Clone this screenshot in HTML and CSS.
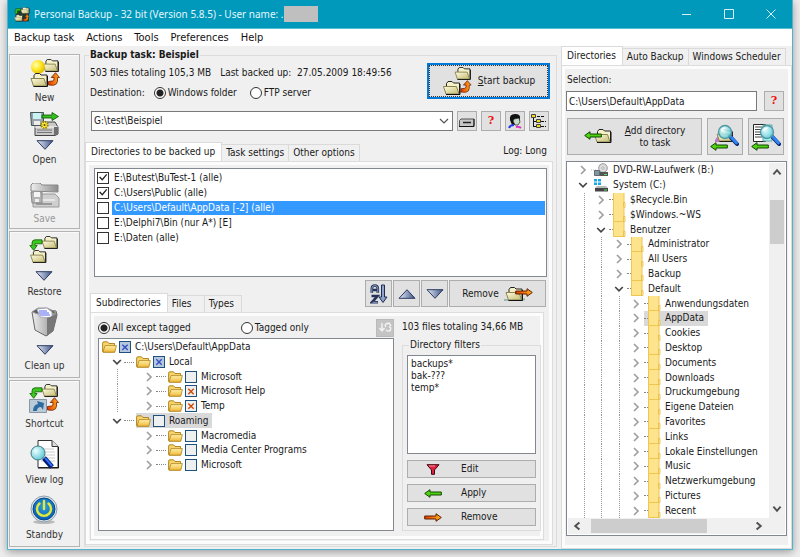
FILE: index.html
```
<!DOCTYPE html>
<html lang="en">
<head>
<meta charset="utf-8">
<title>Personal Backup</title>
<link rel="stylesheet" href="styles.css">
</head>
<body>
<svg class="defs" aria-hidden="true">
  <defs>
    <linearGradient id="gTri" x1="0" x2="1"><stop offset="0" stop-color="#e4eaf8"/><stop offset="1" stop-color="#3f5488"/></linearGradient>
    <linearGradient id="gCream" x1="0" y1="0" x2="1" y2="1"><stop offset="0" stop-color="#fffde0"/><stop offset="1" stop-color="#c2ba70"/></linearGradient>
    <linearGradient id="gGold" x1="0" y1="0" x2="0" y2="1"><stop offset="0" stop-color="#fff0a8"/><stop offset="1" stop-color="#f0b838"/></linearGradient>
    <linearGradient id="gOrange" x1="0" x2="1"><stop offset="0" stop-color="#e03800"/><stop offset="1" stop-color="#ffb020"/></linearGradient>
    <linearGradient id="gGrey" x1="0" x2="1"><stop offset="0" stop-color="#eeeeee"/><stop offset="1" stop-color="#8c8c8c"/></linearGradient>
    <radialGradient id="gBall" cx=".35" cy=".35" r=".7"><stop offset="0" stop-color="#ffffb0"/><stop offset=".5" stop-color="#ffe82a"/><stop offset="1" stop-color="#e0b800"/></radialGradient>
    <radialGradient id="gPower" cx=".5" cy=".4" r=".6"><stop offset="0" stop-color="#2aa0e0"/><stop offset="1" stop-color="#0a5cae"/></radialGradient>
    <radialGradient id="gLens" cx=".35" cy=".35" r=".7"><stop offset="0" stop-color="#ecffff"/><stop offset="1" stop-color="#5cc8d8"/></radialGradient>
  </defs>
  <symbol id="open-folder" viewBox="0 0 18 14">
    <path d="M3.500 12.500V2.500l1.500-2h4l1.500 1.500h6v10.500z" fill="#f4f0c8" stroke="#222"/>
    <path d="M.5 5.500h13l2.500 7.500H3z" fill="url(#gCream)" stroke="#8a8450"/>
    <path d="M3 13.500h14V3" fill="none" stroke="#111"/>
  </symbol>
  <symbol id="arrow-left" viewBox="0 0 18 9">
    <path d="M.7 4.500L6 .7v2.300h11.300v3H6v2.300z" fill="#4fd010" stroke="#104800"/>
  </symbol>
  <symbol id="arrow-right" viewBox="0 0 18 9">
    <path d="M17.300 4.500L12 .7v2.300H.7v3H12v2.300z" fill="url(#gOrange)" stroke="#602000"/>
  </symbol>
  <symbol id="arrow-bend" viewBox="0 0 12 14">
    <path d="M.5 9.500l4-.5q1.500-.3 1.500-2V5.500H3.200L7.500.7l4 4.800H9.500V9q0 3.500-4 4.300L.5 13z" fill="url(#gOrange)" stroke="#702000" stroke-width=".8"/>
  </symbol>
  <symbol id="arrow-down-bend" viewBox="0 0 14 12">
    <path d="M13 .8H6Q3 1 3 4v2.500H.8L4.700 11.300l3.500-4.800H6V4.800h7z" fill="#3cc820" stroke="#105c00" stroke-width=".8"/>
  </symbol>
  <symbol id="tri-down" viewBox="0 0 18 10">
    <path d="M1 .7h16L9 9.300z" fill="url(#gTri)" stroke="#2c3a60"/>
  </symbol>
  <symbol id="tri-up" viewBox="0 0 18 10">
    <path d="M1 9.300h16L9 .7z" fill="url(#gTri)" stroke="#2c3a60"/>
  </symbol>
  <symbol id="chev-right" viewBox="0 0 10 10">
    <path d="M3 1l4 4-4 4" fill="none" stroke="#a0a0a0" stroke-width="1.700"/>
  </symbol>
  <symbol id="chev-down" viewBox="0 0 10 10">
    <path d="M1.200 3L5 6.800 8.800 3" fill="none" stroke="#454545" stroke-width="1.700"/>
  </symbol>
  <symbol id="gold-folder" viewBox="0 0 15 12">
    <path d="M.6 10.500V2.200Q.6.8 2 .8h3.500L7 2.500h5.500V11H1z" fill="#f6d46a" stroke="#a87c18" stroke-width=".9"/>
    <path d="M1 11.200L3 4.600h11.400L12.800 11.200z" fill="url(#gGold)" stroke="#b08420" stroke-width=".8"/>
  </symbol>
  <symbol id="folder" viewBox="0 0 13 15">
    <path d="M0 0h11v15H0z" fill="#fde48c"/>
    <path d="M.5 0v14.500h10.500M11 0v10" fill="none" stroke="#eec650"/>
    <path d="M10.500 9.500h1.500v5h-1.500z" fill="#ffeeaa" stroke="#e6b93c" stroke-width=".8"/>
  </symbol>
  <symbol id="drive" viewBox="0 0 27 15">
    <path d="M3 5L7 1h16l3 5v7l-3 1.500H3z" fill="#c9c9c9" stroke="#444"/>
    <path d="M2.500 6H26" stroke="#fff"/>
    <path d="M5 9h15M5 11.500h15" stroke="#777"/>
    <path d="M22 6v8.500l4-2V6z" fill="#707070"/>
  </symbol>
  <symbol id="glass" viewBox="0 0 22 22">
    <path d="M13 12.500l7 7.500" stroke="#06206c" stroke-width="4" stroke-linecap="round"/>
    <path d="M13.500 12.500l6 6.500" stroke="#2e86f6" stroke-width="2.800" stroke-linecap="round"/>
    <circle cx="8" cy="8" r="6.500" fill="url(#gLens)" fill-opacity=".85" stroke="#4e9aa2" stroke-width="1.400"/>
    <path d="M4.500 7q1-3 4-3" fill="none" stroke="#fff" stroke-width="1.500"/>
  </symbol>
</svg>

<div class="window">
  <header class="titlebar">
    <svg class="app-icon" width="16" height="15" viewBox="0 0 30 28"><rect x="3" y="3" width="25" height="24" fill="#203a30"/><use href="#open-folder" x="12" y="0" width="18" height="13"/><use href="#open-folder" x="0" y="14" width="18" height="13"/><use href="#arrow-bend" x="17" y="13" width="12" height="14"/><use href="#arrow-down-bend" x="0" y="2" width="13" height="12"/></svg>
    <h1>Personal Backup - 32 bit (Version 5.8.5) - User name: .</h1><span class="redacted"></span>
    <div class="controls">
      <button aria-label="Minimize"><svg width="12" height="12" viewBox="0 0 12 12"><path d="M1 6.500h9"/></svg></button>
      <button aria-label="Maximize"><svg width="12" height="12" viewBox="0 0 12 12"><path d="M1.500 1.500h9v9h-9z"/></svg></button>
      <button aria-label="Close"><svg width="12" height="12" viewBox="0 0 12 12"><path d="M1.500 1.500l9 9M10.500 1.500l-9 9"/></svg></button>
    </div>
  </header>
  <nav class="menu">
    <button>Backup task</button><button>Actions</button><button>Tools</button><button>Preferences</button><button>Help</button>
  </nav>

  <div class="content">
    <aside class="toolbar">
      <div class="group">
        <button class="tool"><svg width="30" height="30" viewBox="0 0 30 30"><use href="#open-folder" x="12" y="1" width="18" height="13"/><circle cx="8" cy="9" r="7" fill="url(#gBall)"/><path d="M6 15h4v3H6z" fill="#d8c850"/><use href="#open-folder" x="0" y="15" width="19" height="14"/><use href="#arrow-bend" x="18" y="14" width="12" height="14"/></svg><span>New</span></button>
        <button class="tool"><svg width="30" height="26" viewBox="0 0 30 26"><use href="#drive" x="2" y="10" width="27" height="15"/><path d="M.5 1.500h13v13H1.500z" fill="#9ba4a6" stroke="#455"/><path d="M3 2h8v6H3z" fill="#c8f4f8"/><path d="M4 10h6v4H4z" fill="#eee"/><path d="M12 4h10V1.500l6.500 4-6.500 4V7H12z" fill="#34c020" stroke="#0c5000" stroke-width=".8"/><circle cx="14.500" cy="14" r="3.200" fill="#ffee40" stroke="#a08600" stroke-width="2" stroke-dasharray="1.500 1"/><circle cx="14.500" cy="14" r="1" fill="#554400"/></svg><svg class="tri" width="18" height="10"><use href="#tri-down"/></svg><span>Open</span></button>
        <button class="tool save" disabled><svg width="30" height="26" viewBox="0 0 30 26"><path d="M1 8V2l2-2h7l2 2h16v7z" fill="url(#gGrey)" stroke="#888"/><path d="M3 15l4-4h18l4 4v9H3z" fill="#cfcfcf" stroke="#999"/><path d="M4 17h21" stroke="#fff"/><path d="M6 21h16" stroke="#999" stroke-width="2"/><path d="M1 9h11v11H2z" fill="#b4b4b4" stroke="#888"/><path d="M4 9h6v5H4z" fill="#f4f4f4"/><path d="M5 16h4v3H5z" fill="#eee"/></svg><span>Save</span></button>
      </div>
      <div class="group">
        <button class="tool"><svg width="30" height="32" viewBox="0 0 30 32"><use href="#open-folder" x="12" y="1" width="18" height="13"/><use href="#arrow-down-bend" x="0" y="4" width="14" height="12"/><use href="#open-folder" x="0" y="15" width="19" height="13"/></svg><svg class="tri" width="18" height="10"><use href="#tri-down"/></svg><span>Restore</span></button>
        <button class="tool"><svg width="30" height="34" viewBox="0 0 30 34"><path d="M2 5l6-3 18 2 1 4-4 16-7 5-11-6z" fill="url(#gGrey)" stroke="#666"/><path d="M2 5l15 5 9-5-9-4H8z" fill="#5b5b5b" stroke="#999"/><path d="M7 2l10-1 5 4v6l-12-1z" fill="#fff" stroke="#aab"/><path d="M9 4h8M9 6h10M10 8h10" stroke="#5566ee"/><path d="M17 11v18l6-5 4-17z" fill="#777"/></svg><svg class="tri" width="18" height="10"><use href="#tri-down"/></svg><span>Clean up</span></button>
      </div>
      <div class="group">
        <button class="tool"><svg width="30" height="30" viewBox="0 0 30 30"><use href="#open-folder" x="12" y="0" width="18" height="13"/><use href="#arrow-down-bend" x="0" y="3" width="14" height="12"/><path d="M.5 15.500h17v13H.5z" fill="#b9cbd6" stroke="#8796a2"/><path d="M4 27q0-6 5-7l-1-3 7 2-1 7-2-3q-4 0-4 4z" fill="#2c6aa0"/><use href="#arrow-bend" x="18" y="13" width="12" height="14"/></svg><span>Shortcut</span></button>
        <button class="tool"><svg width="30" height="31" viewBox="0 0 30 31"><path d="M8 1.500h14l6 6v21H8z" fill="#fff" stroke="#333"/><path d="M22 1.500v6h6" fill="#ddd" stroke="#333"/><path d="M11 10h13M11 13h14M11 16h14M11 19h14M11 22h14" stroke="#ccc"/><path d="M28.500 8v21H8" fill="none" stroke="#111"/><path d="M14 19l8 9" stroke="#001870" stroke-width="5"/><path d="M15 19l7 8" stroke="#2870f8" stroke-width="2"/><circle cx="8" cy="14" r="7" fill="url(#gLens)" stroke="#447a80"/></svg><span>View log</span></button>
        <button class="tool"><svg width="30" height="30" viewBox="0 0 30 30"><ellipse cx="15" cy="27" rx="11" ry="2" fill="#bbb"/><circle cx="15" cy="14" r="13" fill="#dfe6ea" stroke="#8fa0ac"/><circle cx="15" cy="14" r="11" fill="url(#gPower)" stroke="#064a8c"/><path d="M10.500 8.500a7 7 0 1 0 9 0M15 6v8" fill="none" stroke="#e2e83c" stroke-width="2.400" stroke-linecap="round"/></svg><span>Standby</span></button>
      </div>
    </aside>

    <fieldset class="task">
      <legend>Backup task: Beispiel</legend>
      <div class="head">
        <div class="facts">
          <p><span>503 files totaling 105,3 MB</span><span>Last backed up: &nbsp;27.05.2009 18:49:56</span></p>
          <div class="dest"><span>Destination:</span><label><input type="radio" name="dest" checked>Windows folder</label><label><input type="radio" name="dest">FTP server</label></div>
        </div>
        <button class="start"><svg width="30" height="29" viewBox="0 0 30 29"><use href="#open-folder" x="12" y="0" width="18" height="13"/><use href="#open-folder" x="0" y="14" width="20" height="14"/><use href="#arrow-bend" x="18" y="13" width="12" height="13"/></svg><span><u>S</u>tart backup</span></button>
      </div>
      <div class="target">
        <div class="combo"><select aria-label="Destination path"><option>G:\test\Beispiel</option></select><svg width="10" height="10" viewBox="0 0 10 10"><path d="M1 3l4 4 4-4" fill="none" stroke="#555" stroke-width="1.200"/></svg></div>
        <button class="btn mini" aria-label="Drive"><svg width="16" height="14" viewBox="0 0 16 14"><path d="M.5 6.500L2 5h13v6l-1 1.500H.5z" fill="#c6c6c6" stroke="#555"/><path d="M4 8.500h8" stroke="#222" stroke-width="1.500"/><path d="M0 12.500h15V5" fill="none" stroke="#111"/></svg></button>
        <button class="btn mini help">?</button>
        <button class="btn mini" aria-label="User"><svg width="16" height="16" viewBox="0 0 16 16"><path d="M3 7q-1-6 5-6t5 5l-1 4-2 2H5z" fill="#111"/><path d="M7 6l5-1 1 4-2 3H8L6 8z" fill="#c8dcc8" stroke="#222" stroke-width=".7"/><path d="M2 15q1-3 5-3" stroke="#2838e8" stroke-width="2" fill="none"/><path d="M9 14q3-1 5 1" stroke="#e030c0" stroke-width="2" fill="none"/></svg></button>
        <button class="btn mini" aria-label="Tree"><svg width="16" height="16" viewBox="0 0 16 16"><path d="M2.500 4v10M2 8.500h4M2 13.500h4" stroke="#111"/><path d="M6 3.500h8M10 8.500h5M10 13.500h5" stroke="#111" stroke-dasharray="3 1"/><path d="M.5 1.500h4v3h-4zM5.500 6.500h4v3h-4zM5.500 11.500h4v3h-4z" fill="#f0e010" stroke="#444"/></svg></button>
      </div>

      <div class="tabrow">
        <div class="tabs" role="tablist"><button role="tab" class="on">Directories to be backed up</button><button role="tab">Task settings</button><button role="tab">Other options</button></div>
        <span class="log">Log: Long</span>
      </div>
      <div class="panel outer">
        <ul class="dirs">
          <li><label><input type="checkbox" checked><span>E:\Butest\BuTest-1 (alle)</span></label></li>
          <li><label><input type="checkbox" checked><span>C:\Users\Public (alle)</span></label></li>
          <li class="sel"><label><input type="checkbox"><span>C:\Users\Default\AppData [-2] (alle)</span></label></li>
          <li><label><input type="checkbox"><span>E:\Delphi7\Bin (nur A*) [E]</span></label></li>
          <li><label><input type="checkbox"><span>E:\Daten (alle)</span></label></li>
        </ul>
        <div class="midrow">
          <div class="tabs short" role="tablist"><button role="tab" class="on">Subdirectories</button><button role="tab">Files</button><button role="tab">Types</button></div>
          <div class="actions">
            <button class="btn sq" aria-label="Sort"><svg width="18" height="20" viewBox="0 0 18 20"><path d="M1.800 9V4.500Q2 1.500 4.800 1.500t3 3V9M2 6h6M1.500 12h6l-5.500 6.300h6" fill="none" stroke="#26345a" stroke-width="2.600"/><path d="M1.800 9V4.500Q2 1.500 4.800 1.500t3 3V9M2.500 18.300h5" fill="none" stroke="#96a8d0" stroke-width=".9"/><path d="M11.500 1h3v12h2.500l-4 5.500-4-5.500h2.500z" fill="#8fa2cc" stroke="#1e2c50"/></svg></button>
            <button class="btn sq" aria-label="Move up"><svg width="18" height="10"><use href="#tri-up"/></svg></button>
            <button class="btn sq" aria-label="Move down"><svg width="18" height="10"><use href="#tri-down"/></svg></button>
            <button class="btn wide">Remove<svg width="29" height="16" viewBox="0 0 29 16"><path d="M0 14h18l3-1" stroke="#9cb8b0" stroke-width="2"/><use href="#open-folder" x="1" y="1" width="19" height="14"/><use href="#arrow-right" x="11" y="2" width="18" height="9"/></svg></button>
          </div>
        </div>
        <div class="panel inner">
          <div class="left">
            <div class="modes"><label><input type="radio" name="mode" checked>All except tagged</label><label><input type="radio" name="mode">Tagged only</label><button class="refresh" disabled aria-label="Refresh"><svg width="14" height="12" viewBox="0 0 14 12"><path d="M4 1v7M1.500 6L4 9l2.500-3M9 1q-3 2-1 4M8 8q4 3 5-2M13 6l-2-1.500M8 2l3-1 2 3" fill="none" stroke="#f4f4f4" stroke-width="1.400"/></svg></button></div>
            <ul class="subtree">
              <li><svg class="gf"><use href="#gold-folder"/></svg><input type="checkbox" id="s0" class="part" checked><label for="s0">C:\Users\Default\AppData</label></li>
              <li class="l1"><svg class="cv"><use href="#chev-down"/></svg><i></i><svg class="gf"><use href="#gold-folder"/></svg><input type="checkbox" id="s1" class="part" checked><label for="s1">Local</label></li>
              <li class="l2 guide"><svg class="cv"><use href="#chev-right"/></svg><i></i><svg class="gf"><use href="#gold-folder"/></svg><input type="checkbox" id="s2"><label for="s2">Microsoft</label></li>
              <li class="l2 guide"><svg class="cv"><use href="#chev-right"/></svg><i></i><svg class="gf"><use href="#gold-folder"/></svg><input type="checkbox" id="s3" class="cross" checked><label for="s3">Microsoft Help</label></li>
              <li class="l2 guide"><svg class="cv"><use href="#chev-right"/></svg><i></i><svg class="gf"><use href="#gold-folder"/></svg><input type="checkbox" id="s4" class="cross" checked><label for="s4">Temp</label></li>
              <li class="l1"><svg class="cv"><use href="#chev-down"/></svg><i></i><span class="hl"><svg class="gf"><use href="#gold-folder"/></svg><input type="checkbox" id="s5"><label for="s5">Roaming</label></span></li>
              <li class="l2"><svg class="cv"><use href="#chev-right"/></svg><i></i><svg class="gf"><use href="#gold-folder"/></svg><input type="checkbox" id="s6"><label for="s6">Macromedia</label></li>
              <li class="l2"><svg class="cv"><use href="#chev-right"/></svg><i></i><svg class="gf"><use href="#gold-folder"/></svg><input type="checkbox" id="s7"><label for="s7">Media Center Programs</label></li>
              <li class="l2"><svg class="cv"><use href="#chev-right"/></svg><i></i><svg class="gf"><use href="#gold-folder"/></svg><input type="checkbox" id="s8"><label for="s8">Microsoft</label></li>
            </ul>
          </div>
          <div class="right">
            <p>103 files totaling 34,66 MB</p>
            <fieldset class="filters">
              <legend>Directory filters</legend>
              <ul class="masks"><li>backups*</li><li>bak-???</li><li>temp*</li></ul>
              <button class="btn edit"><svg width="18" height="11" viewBox="0 0 18 11"><path d="M3 .7h12L10.500 6v4.300h-3V6z" fill="#e02040" stroke="#400810"/><path d="M5 2h6" stroke="#ff90a0"/></svg><span>Edit</span></button>
              <button class="btn"><svg width="18" height="9"><use href="#arrow-left"/></svg><span>Apply</span></button>
              <button class="btn"><svg width="18" height="9"><use href="#arrow-right"/></svg><span>Remove</span></button>
            </fieldset>
          </div>
        </div>
      </div>
    </fieldset>

    <section class="side">
      <div class="tabs" role="tablist"><button role="tab" class="on">Directories</button><button role="tab">Auto Backup</button><button role="tab">Windows Scheduler</button></div>
      <div class="panel browse">
        <label for="selection">Selection:</label>
        <div class="pick"><input type="text" id="selection" value="C:\Users\Default\AppData"><button class="btn mini help">?</button></div>
        <div class="adds">
          <button class="btn add"><svg width="28" height="15" viewBox="0 0 28 15"><use href="#open-folder" x="10" y="0" width="18" height="14"/><use href="#arrow-left" x="0" y="2" width="18" height="9"/></svg><span><u>A</u>dd directory<br>to task</span></button>
          <button class="btn find" aria-label="Find directory"><svg width="30" height="28" viewBox="0 0 30 28"><path d="M5 17l5-7h12l-3 9H5z" fill="#b050b0" opacity=".7"/><use href="#open-folder" x="6" y="6" width="18" height="13"/><use href="#glass" x="7" y="0" width="22" height="24"/><use href="#arrow-left" x="0" y="19" width="18" height="9"/></svg></button>
          <button class="btn find" aria-label="Find file"><svg width="30" height="28" viewBox="0 0 30 28"><path d="M2.500 1.500h12v17h-12z" fill="#fff" stroke="#222"/><path d="M4 4h7M4 6.500h7M4 9h7M4 11.500h7M4 14h7" stroke="#444"/><path d="M12 2h9v16h-9z" fill="#aef0f0" stroke="#60a8a8"/><use href="#glass" x="8" y="0" width="22" height="24"/><use href="#arrow-left" x="0" y="19" width="18" height="9"/></svg></button>
        </div>
        <div class="treebox">
          <ul class="tree">
            <li class="d0"><svg class="cv"><use href="#chev-right"/></svg><svg class="disk" viewBox="0 0 18 14"><path d="M0 7h5" stroke="#bbb" stroke-dasharray="1 1"/><circle cx="12" cy="5" r="4.300" fill="#ddd" stroke="#999"/><circle cx="12" cy="5" r="1.200" fill="#fff" stroke="#888" stroke-width=".6"/><path d="M4 9h13v4H4z" fill="#555"/><path d="M3.500 7.500h5v5h-5z" fill="#7a9a9a" stroke="#667"/><path d="M13 11.500h3" stroke="#50e060"/></svg>DVD-RW-Laufwerk (B:)</li>
            <li class="d0"><svg class="cv"><use href="#chev-down"/></svg><svg class="disk" viewBox="0 0 18 14"><path d="M3 1h3v2.500H3zM7 1h3v2.500H7zM3 4.500h3V7H3zM7 4.500h3V7H7z" fill="#16a8e8"/><path d="M6 8h9l2 2H4z" fill="#bbb"/><path d="M4 10h13v3.500H4z" fill="#444"/><path d="M13 12h3" stroke="#50e060"/></svg>System (C:)</li>
            <li class="d1"><svg class="cv"><use href="#chev-right"/></svg><i></i><svg class="fd"><use href="#folder"/></svg>$Recycle.Bin</li>
            <li class="d1"><svg class="cv"><use href="#chev-right"/></svg><i></i><svg class="fd"><use href="#folder"/></svg>$Windows.~WS</li>
            <li class="d1"><svg class="cv"><use href="#chev-down"/></svg><i></i><svg class="fd"><use href="#folder"/></svg>Benutzer</li>
            <li class="d2"><svg class="cv"><use href="#chev-right"/></svg><i></i><svg class="fd"><use href="#folder"/></svg>Administrator</li>
            <li class="d2"><svg class="cv"><use href="#chev-right"/></svg><i></i><svg class="fd"><use href="#folder"/></svg>All Users</li>
            <li class="d2"><svg class="cv"><use href="#chev-right"/></svg><i></i><svg class="fd"><use href="#folder"/></svg>Backup</li>
            <li class="d2"><svg class="cv"><use href="#chev-down"/></svg><i></i><svg class="fd"><use href="#folder"/></svg>Default</li>
            <li class="d3"><svg class="cv"><use href="#chev-right"/></svg><i></i><svg class="fd"><use href="#folder"/></svg>Anwendungsdaten</li>
            <li class="d3"><svg class="cv"><use href="#chev-right"/></svg><span class="hl"><i></i><svg class="fd"><use href="#folder"/></svg>AppData</span></li>
            <li class="d3"><svg class="cv"><use href="#chev-right"/></svg><i></i><svg class="fd"><use href="#folder"/></svg>Cookies</li>
            <li class="d3"><svg class="cv"><use href="#chev-right"/></svg><i></i><svg class="fd"><use href="#folder"/></svg>Desktop</li>
            <li class="d3"><svg class="cv"><use href="#chev-right"/></svg><i></i><svg class="fd"><use href="#folder"/></svg>Documents</li>
            <li class="d3"><svg class="cv"><use href="#chev-right"/></svg><i></i><svg class="fd"><use href="#folder"/></svg>Downloads</li>
            <li class="d3"><svg class="cv"><use href="#chev-right"/></svg><i></i><svg class="fd"><use href="#folder"/></svg>Druckumgebung</li>
            <li class="d3"><svg class="cv"><use href="#chev-right"/></svg><i></i><svg class="fd"><use href="#folder"/></svg>Eigene Dateien</li>
            <li class="d3"><svg class="cv"><use href="#chev-right"/></svg><i></i><svg class="fd"><use href="#folder"/></svg>Favorites</li>
            <li class="d3"><svg class="cv"><use href="#chev-right"/></svg><i></i><svg class="fd"><use href="#folder"/></svg>Links</li>
            <li class="d3"><svg class="cv"><use href="#chev-right"/></svg><i></i><svg class="fd"><use href="#folder"/></svg>Lokale Einstellungen</li>
            <li class="d3"><svg class="cv"><use href="#chev-right"/></svg><i></i><svg class="fd"><use href="#folder"/></svg>Music</li>
            <li class="d3"><svg class="cv"><use href="#chev-right"/></svg><i></i><svg class="fd"><use href="#folder"/></svg>Netzwerkumgebung</li>
            <li class="d3"><svg class="cv"><use href="#chev-right"/></svg><i></i><svg class="fd"><use href="#folder"/></svg>Pictures</li>
            <li class="d3"><svg class="cv"><use href="#chev-right"/></svg><i></i><svg class="fd"><use href="#folder"/></svg>Recent</li>
          </ul>
          <div class="vbar"><svg viewBox="0 0 10 10"><path d="M2 7l3-3.500L8 7"/></svg><span class="thumb"></span><svg viewBox="0 0 10 10"><path d="M2 3l3 3.500L8 3"/></svg></div>
          <div class="hbar"><svg viewBox="0 0 10 10"><path d="M7 2L3.500 5 7 8"/></svg><span class="thumb"></span><svg viewBox="0 0 10 10"><path d="M3 2l3.500 3L3 8"/></svg></div>
        </div>
      </div>
    </section>
  </div>
</div>
</body>
</html>
```
FILE: styles.css
```
* { box-sizing: border-box; }
body {
  margin: 0;
  height: 100vh;
  padding: 0 7px 7px;
  background: #ededed;
  font: 10px/14px "DejaVu Sans Condensed", "DejaVu Sans", sans-serif;
  color: #1a1a1a;
}
h1, p, ul { margin: 0; padding: 0; }
ul { list-style: none; }
svg { display: block; flex: none; }
button, input, select { font: inherit; color: inherit; }
button { padding: 0; border: 0; background: none; }
.defs { position: absolute; width: 0; height: 0; }

.window {
  height: 100%;
  display: flex;
  flex-direction: column;
  background: #f0f0f0;
  border: 1px solid #50b4cc;
  border-top: 0;
  box-shadow: 0 2px 8px rgba(0, 0, 0, .35);
}
.titlebar {
  height: 29px;
  flex: none;
  display: flex;
  align-items: center;
  padding-left: 6px;
  background: #0099bc;
  border-bottom: 1px solid #58bcd2;
  color: #e4f6fa;
}
.titlebar h1 { margin-left: 4px; font: 10px/16px "Noto Sans", "Open Sans", sans-serif; white-space: nowrap; }
.redacted { width: 34px; height: 16px; background: #bfbfbf; }
.controls { margin-left: auto; display: flex; }
.controls button { width: 42px; height: 28px; display: grid; place-items: center; }
.controls path { fill: none; stroke: #d8f2f8; stroke-width: 1; }
.menu {
  height: 17px;
  flex: none;
  display: flex;
  gap: 12px;
  padding-left: 6px;
  background: #fff;
  font-size: 11px;
  color: #111;
}

.content { flex: 1; min-height: 0; display: grid; grid-template-columns: 71px minmax(0, 1fr) 231px; column-gap: 4px; padding-left: 1px; }

/* left toolbar */
.toolbar { display: flex; flex-direction: column; gap: 2px; padding: 8px 0 2px; }
.group {
  flex: 176 0 0;
  display: flex;
  flex-direction: column;
  align-items: center;
  gap: 6px;
  padding-top: 3px;
  border: 1px solid #b4b4b4;
  box-shadow: inset 1px 1px #fafafa;
}
.group + .group { gap: 8px; }
.group:nth-child(2) { flex-grow: 147; }
.group:nth-child(2) .tool { gap: 4px; }
.group:nth-child(3) { flex-grow: 167; }
.tool { display: flex; flex-direction: column; align-items: center; gap: 3px; color: #333; }
.tool:disabled { padding-top: 10px; color: #999; }

/* tabs and panels */
.tabs { display: flex; align-items: flex-end; }
.tabs button {
  height: 17px;
  padding: 0 4px;
  background: #f0f0f0;
  border: 1px solid #dadada;
  border-left-width: 0;
  border-bottom: 0;
  text-align: left;
  white-space: nowrap;
}
.tabs .on { height: 19px; padding: 0 6px 1px 5px; border-left-width: 1px; background: #fff; }
.short button { min-width: 37px; }
.panel { border: 1px solid #dcdcdc; box-shadow: inset 0 0 0 3px #fcfcfc; }

/* buttons and inputs */
.btn {
  display: flex;
  align-items: center;
  justify-content: center;
  background: #e1e1e1;
  border: 1px solid #adadad;
}
.mini { width: 20px; height: 20px; flex: none; }
.help { color: #f01010; font: bold 11px/14px "DejaVu Serif", serif; }
label { display: flex; align-items: center; }
input[type=radio] {
  appearance: none;
  width: 12px;
  height: 12px;
  margin: 0 2px 0 0;
  border: 1px solid #333;
  border-radius: 50%;
  background: #fff;
}
input[type=radio]:checked { background: radial-gradient(circle, #222 0 3px, #fff 4px); }
input[type=checkbox] { appearance: none; flex: none; width: 12px; height: 12px; margin: 0; border: 1px solid #333; background: #fff; }

/* backup task */
.task {
  min-width: 0;
  display: flex;
  flex-direction: column;
  margin: 3px 0 2px;
  padding: 2px 3px 1px 0;
  border: 1px solid #dcdcdc;
}
.task > legend { margin-left: 4px; padding: 0 1px; font-weight: bold; line-height: 12px; }
.head { display: flex; justify-content: space-between; padding: 0 3px 0 5px; }
.facts { padding-top: 3px; }
.facts p { display: flex; gap: 9px; margin-bottom: 6px; white-space: nowrap; }
.dest { display: flex; white-space: nowrap; }
.dest label:nth-child(2) { margin-left: 9px; }
.dest label:nth-child(3) { margin-left: 13px; }
.start {
  flex: none;
  width: 123px;
  height: 36px;
  display: flex;
  align-items: center;
  justify-content: center;
  gap: 6px;
  background: #e1e1e1;
  border: 2px solid #0078d7;
  outline: 1px dotted #333;
  outline-offset: -3px;
}
.target { display: flex; gap: 4px; margin-top: 11px; padding: 0 4px 0 6px; }
.combo { position: relative; flex: 1; }
.combo select { width: 100%; height: 20px; appearance: none; padding: 0 2px; border: 1px solid #7a7a7a; border-radius: 0; background: #fff; }
.combo svg { position: absolute; right: 4px; top: 5px; pointer-events: none; }
.tabrow { display: flex; justify-content: space-between; align-items: flex-end; margin-top: 11px; }
.log { padding: 0 6px 3px 0; }
.outer { flex: 1; min-height: 0; display: flex; flex-direction: column; padding: 6px 8px 4px 4px; }
.dirs { flex: none; height: 109px; margin-left: 4px; margin-right: -3px; padding: 1px; border: 1px solid #828790; background: #fff; }
.dirs li { height: 15px; }
.dirs label { height: 15px; gap: 3px; padding-left: 1px; }
.dirs span { flex: 1; padding-left: 2px; }
.dirs .sel span { background: #3399ff; color: #fff; }
.dirs :checked::before {
  content: "";
  display: block;
  height: 10px;
  background: #222;
  clip-path: polygon(10% 48%, 22% 40%, 42% 62%, 82% 14%, 92% 22%, 43% 82%);
}
.midrow { display: flex; justify-content: space-between; align-items: flex-end; height: 35px; }
.actions { align-self: flex-start; display: flex; gap: 1px; margin: 3px -2px 0 0; }
.sq { width: 27px; height: 27px; }
.wide { width: 97px; height: 27px; gap: 5px; }
.inner { flex: 1; min-height: 0; display: grid; grid-template-columns: minmax(0, 1fr) 139px; column-gap: 8px; padding: 5px 2px 8px 7px; }
.left, .right { display: flex; flex-direction: column; min-height: 0; }
.modes { display: flex; align-items: center; height: 19px; flex: none; margin-bottom: 1px; }
.modes label:nth-child(2) { margin-left: 50px; }
.refresh { width: 18px; height: 18px; display: grid; place-items: center; margin-left: auto; background: #c4c4c4; border: 1px solid #bababa; }
.subtree { flex: 1; display: grid; grid-template-rows: repeat(9, minmax(0, 133fr)) 513fr; padding: 1px 3px; border: 1px solid #828790; background: #fff; }
.subtree li, .hl { display: flex; align-items: center; white-space: nowrap; }
.gf { width: 15px; height: 12px; margin-right: 2px; }
.cv { width: 10px; height: 10px; }
.subtree input { margin-right: 4px; border-color: #1c5180; background-color: #eef0f0; }
.subtree .l1 { padding-left: 10px; }
.subtree .l2 { padding-left: 42px; }
.subtree i { width: 10px; margin: 0 2px; border-top: 1px dotted #888; }
.subtree .hl { height: 100%; background: #d9d9d9; padding-right: 3px; }
.guide { background: repeating-linear-gradient(#999 0 1px, transparent 1px 2px) 15px 0 / 1px 100% no-repeat; }
.subtree .part { background: #b8c8dc; }
.subtree :checked::before {
  content: "";
  display: block;
  height: 10px;
  background: #3350c8;
  clip-path: polygon(18% 28%, 28% 18%, 50% 40%, 72% 18%, 82% 28%, 60% 50%, 82% 72%, 72% 82%, 50% 60%, 28% 82%, 18% 72%, 40% 50%);
}
.subtree .cross:checked::before { background: #d04a08; }
.right p { padding-top: 2px; white-space: nowrap; }
.filters { flex: 1; min-width: 0; display: flex; flex-direction: column; gap: 6px; margin: 4px 0 0; padding: 3px 4px 4px; border: 1px solid #dcdcdc; }
.filters legend { margin-left: 2px; padding: 0 1px; }
.masks { flex: 1; padding: 2px 3px; border: 1px solid #828790; background: #fff; line-height: 12px; }
.filters .btn { height: 18px; justify-content: flex-start; gap: 19px; padding-left: 16px; }

/* directory browser */
.side { display: flex; flex-direction: column; min-height: 0; }
.browse { flex: 1; min-height: 0; display: flex; flex-direction: column; padding: 7px 4px 12px; }
.browse > label { padding-left: 1px; }
.pick { display: flex; justify-content: space-between; margin: 4px 3px 7px 0; }
.pick input { width: 191px; height: 20px; padding: 0 2px; border: 1px solid #7a7a7a; background: #fff; }
.adds { display: flex; gap: 5px; margin: 0 3px 6px 1px; }
.adds .btn { height: 37px; }
.add { flex: 1; gap: 13px; line-height: 12px; text-align: center; }
.find { width: 36px; }
.treebox { flex: 1; min-height: 0; display: grid; grid-template: minmax(0, 1fr) 16px / minmax(0, 1fr) 16px; padding: 1px; border: 1px solid #828790; background: #fff; }
.tree { min-height: 0; display: flex; flex-direction: column; }
.tree li { flex: 1 1 0; min-height: 0; display: flex; align-items: center; white-space: nowrap; background-repeat: no-repeat; background-size: 1px 100%; }
.tree .cv { margin: 0 3px; }
.tree i { width: 4px; border-top: 1px dotted #888; }
.fd { width: 13px; height: 15px; margin-right: 4px; }
.disk { width: 18px; height: 14px; margin-right: 4px; }
.tree .hl { height: 100%; padding-right: 4px; background: #d9d9d9; }
.d0 { padding-left: 7px; }
.d1 { padding-left: 25px; }
.d2 { padding-left: 43px; }
.d3 { padding-left: 60px; }
.d1, .d2, .d3 { background-image: repeating-linear-gradient(#999 0 1px, transparent 1px 2px); background-position: 16px 0; }
.d2 { background-image: repeating-linear-gradient(#999 0 1px, transparent 1px 2px), repeating-linear-gradient(#999 0 1px, transparent 1px 2px); background-position: 16px 0, 33px 0; }
.d3 { background-image: repeating-linear-gradient(#999 0 1px, transparent 1px 2px), repeating-linear-gradient(#999 0 1px, transparent 1px 2px), repeating-linear-gradient(#999 0 1px, transparent 1px 2px); background-position: 16px 0, 33px 0, 51px 0; }
.vbar, .hbar { display: flex; align-items: center; background: #f0f0f0; }
.vbar { flex-direction: column; padding: 3px 0; }
.hbar { grid-column: 1 / -1; padding: 0 20px 0 3px; }
.vbar svg, .hbar svg { width: 12px; height: 12px; }
.vbar path, .hbar path { fill: none; stroke: #505050; stroke-width: 1.6; }
.thumb { background: #cdcdcd; }
.vbar .thumb { width: 14px; height: 44px; margin: 22px 0 auto; }
.hbar .thumb { width: 116px; height: 14px; margin: 0 auto 0 8px; }
```
